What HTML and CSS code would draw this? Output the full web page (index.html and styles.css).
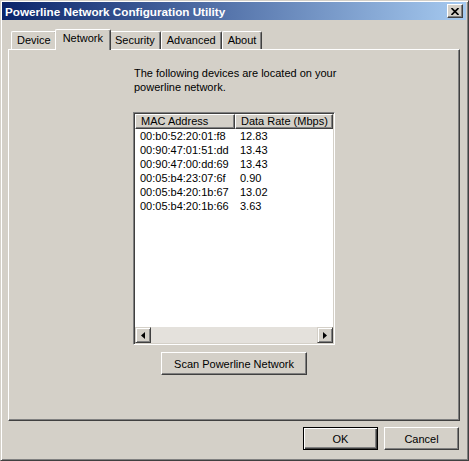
FILE: index.html
```html
<!DOCTYPE html>
<html>
<head>
<meta charset="utf-8">
<link rel="stylesheet" href="styles.css">
</head>
<body>
<div class="window">
  <div class="titlebar">
    <span class="title">Powerline Network Configuration Utility</span>
    <span class="close"><svg width="8" height="7" viewBox="0 0 8 7"><path d="M0.5 0 L7.5 7 M7.5 0 L0.5 7" stroke="#000" stroke-width="1.6"/></svg></span>
  </div>
  <div class="client">
    <div class="tabs">
      <div class="tab">Device</div>
      <div class="tab active">Network</div>
      <div class="tab">Security</div>
      <div class="tab">Advanced</div>
      <div class="tab">About</div>
    </div>
    <div class="panel">
      <p class="intro">The following devices are located on your<br>powerline network.</p>
      <div class="listview">
        <div class="lv-header">
          <div class="hcell c1">MAC Address</div>
          <div class="hcell c2">Data Rate (Mbps)</div>
        </div>
        <div class="lv-rows">
          <div class="row"><span class="c1">00:b0:52:20:01:f8</span><span class="c2">12.83</span></div>
          <div class="row"><span class="c1">00:90:47:01:51:dd</span><span class="c2">13.43</span></div>
          <div class="row"><span class="c1">00:90:47:00:dd:69</span><span class="c2">13.43</span></div>
          <div class="row"><span class="c1">00:05:b4:23:07:6f</span><span class="c2">0.90</span></div>
          <div class="row"><span class="c1">00:05:b4:20:1b:67</span><span class="c2">13.02</span></div>
          <div class="row"><span class="c1">00:05:b4:20:1b:66</span><span class="c2">3.63</span></div>
        </div>
        <div class="hscroll">
          <div class="sbtn"><svg width="4" height="7" viewBox="0 0 4 7"><path d="M4 0 L0 3.5 L4 7 Z" fill="#000"/></svg></div>
          <div class="track"></div>
          <div class="sbtn"><svg width="4" height="7" viewBox="0 0 4 7"><path d="M0 0 L4 3.5 L0 7 Z" fill="#000"/></svg></div>
        </div>
      </div>
      <button class="btn scan">Scan Powerline Network</button>
    </div>
    <div class="footer">
      <button class="btn default">OK</button>
      <button class="btn">Cancel</button>
    </div>
  </div>
</div>
</body>
</html>
```
FILE: styles.css
```css
* { box-sizing: border-box; }
html, body { margin: 0; padding: 0; background: #d4d0c8; }
body {
  font-family: "Liberation Sans", Arial, sans-serif;
  font-size: 11px;
  color: #000;
}
.window {
  width: 469px;
  height: 461px;
  background: #d4d0c8;
  border: 1px solid;
  border-color: #d4d0c8 #404040 #404040 #d4d0c8;
  box-shadow: inset 1px 1px #fff, inset -1px -1px #808080;
  padding: 1px 2px 2px 1px;
  display: flex;
  flex-direction: column;
}
.titlebar {
  height: 18px;
  flex: none;
  background: linear-gradient(to right, #0a246a, #a6caf0);
  display: flex;
  align-items: center;
  justify-content: space-between;
  padding: 0 3px 0 3px;
}
.title {
  color: #fff;
  font-weight: bold;
  font-size: 11.7px;
  white-space: nowrap;
}
.close {
  width: 16px;
  height: 14px;
  background: #d4d0c8;
  border: 1px solid;
  border-color: #fff #404040 #404040 #fff;
  box-shadow: inset -1px -1px #808080;
  display: flex;
  align-items: center;
  justify-content: center;
}
.client {
  flex: 1;
  display: flex;
  flex-direction: column;
  padding: 9px 6px 0 6px;
}
.tabs {
  height: 21px;
  margin-bottom: -1px;
  display: flex;
  align-items: flex-start;
  padding-left: 3px;
  position: relative;
  z-index: 2;
}
.tab {
  height: 18px;
  margin-top: 2px;
  padding: 0 5px;
  line-height: 17px;
  background: #d4d0c8;
  border: 1px solid;
  border-bottom: none;
  border-color: #fff #404040 #404040 #fff;
  box-shadow: inset -1px 0 #808080;
  border-radius: 2px 2px 0 0;
  white-space: nowrap;
}
.tab.active {
  height: 21px;
  margin: 0 -2px;
  padding: 0 7px;
  line-height: 17px;
  position: relative;
  z-index: 3;
}
.panel {
  height: 372px;
  flex: none;
  border: 1px solid;
  border-color: #fff #404040 #404040 #fff;
  box-shadow: inset -1px -1px #808080;
  display: flex;
  flex-direction: column;
  align-items: center;
  padding-top: 16px;
  position: relative;
  z-index: 1;
}
.intro {
  margin: 0;
  width: 202px;
  line-height: 14px;
  white-space: nowrap;
  padding-left: 1px;
}
.listview {
  margin-top: 18px;
  width: 202px;
  height: 233px;
  background: #fff;
  border: 1px solid;
  border-color: #808080 #fff #fff #808080;
  box-shadow: inset 1px 1px #404040, inset -1px -1px #d4d0c8;
  padding: 1px;
  display: flex;
  flex-direction: column;
}
.lv-header {
  height: 15px;
  display: flex;
  flex: none;
}
.hcell {
  background: #d4d0c8;
  border: 1px solid;
  border-color: #fff #404040 #404040 #fff;
  box-shadow: inset -1px -1px #808080;
  padding-left: 5px;
  line-height: 13px;
  white-space: nowrap;
}
.hcell.c1 { width: 100px; }
.hcell.c2 { width: 98px; }
.lv-rows { flex: 1; }
.row {
  height: 14px;
  line-height: 14px;
  display: flex;
  white-space: nowrap;
}
.row .c1 { width: 100px; padding-left: 5px; }
.row .c2 { padding-left: 5px; }
.hscroll {
  height: 16px;
  flex: none;
  display: flex;
}
.sbtn {
  width: 16px;
  height: 16px;
  background: #d4d0c8;
  border: 1px solid;
  border-color: #d4d0c8 #404040 #404040 #d4d0c8;
  box-shadow: inset 1px 1px #fff, inset -1px -1px #808080;
  display: flex;
  align-items: center;
  justify-content: center;
}
.track {
  flex: 1;
  background: #e4e1dc;
}
.btn {
  font-family: "Liberation Sans", Arial, sans-serif;
  font-size: 11px;
  color: #000;
  background: #d4d0c8;
  border: 1px solid;
  border-color: #fff #404040 #404040 #fff;
  box-shadow: inset -1px -1px #808080;
  height: 23px;
  padding: 0;
  margin: 0;
}
.scan {
  margin-top: 7px;
  width: 146px;
}
.footer {
  display: flex;
  justify-content: flex-end;
  gap: 6px;
  padding-top: 6px;
  padding-right: 1px;
}
.footer .btn { width: 75px; }
.btn.default {
  border-color: #000;
  box-shadow: inset 1px 1px #fff, inset -1px -1px #404040, inset -2px -2px #808080;
}
```
